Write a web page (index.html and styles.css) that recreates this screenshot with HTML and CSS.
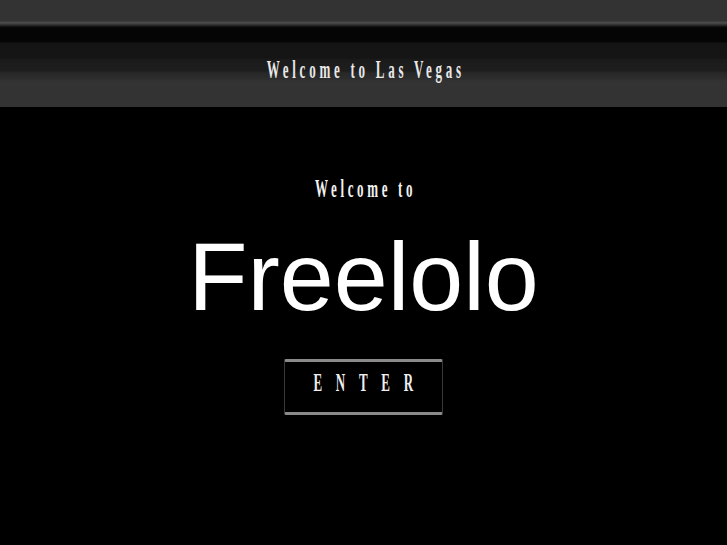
FILE: index.html
```html
<!DOCTYPE html>
<html>
<head>
<meta charset="utf-8">
<link rel="stylesheet" href="styles.css">
</head>
<body>
<header class="topbar">
  <span class="cond head-title">Welcome to Las Vegas</span>
</header>
<main class="intro">
  <div class="cond welcome">Welcome to</div>
  <h1 class="brand">Freelolo</h1>
  <a class="enter" href="#"><span class="cond enter-label">ENTER</span></a>
</main>
</body>
</html>
```
FILE: styles.css
```css
html, body {
  margin: 0;
  padding: 0;
  background: #000;
}
body {
  width: 727px;
  height: 545px;
  overflow: hidden;
  font-family: "Liberation Sans", Arial, sans-serif;
}
.topbar {
  box-sizing: border-box;
  height: 108px;
  padding-top: 55px;
  text-align: center;
  background: linear-gradient(to bottom,
    #333 0, #333 21px, #474747 22px, #4c4c4c 23px, #2c2c2c 25px,
    #0b0b0b 27px, #050505 28px, #050505 42px,
    #141414 43px, #151515 58px, #1b1b1b 60px, #1e1e1e 71px,
    #282828 73px, #2d2d2d 79px, #333 81px, #333 107px, #000 107px);
}
.cond {
  display: inline-block;
  font-family: "Liberation Serif", "Times New Roman", serif;
  font-weight: bold;
  font-size: 26px;
  line-height: 30px;
  transform: scaleX(0.5);
  transform-origin: center;
  white-space: nowrap;
}
.head-title {
  color: #e8e8e8;
  letter-spacing: 7.5px;
  padding-left: 7.5px;
}
.intro {
  display: flex;
  flex-direction: column;
  align-items: center;
}
.welcome {
  margin-top: 66px;
  color: #f2f2f2;
  letter-spacing: 7.3px;
  padding-left: 7.3px;
}
.brand {
  margin: 24px 0 0;
  font-family: "Liberation Sans", Arial, sans-serif;
  font-weight: normal;
  font-size: 97px;
  line-height: 97px;
  color: #fff;
}
.enter {
  box-sizing: border-box;
  display: flex;
  justify-content: center;
  align-items: flex-start;
  margin-top: 34px;
  width: 159px;
  height: 56px;
  padding-top: 6px;
  text-decoration: none;
  border-top: 3px solid #8a8a8a;
  border-bottom: 3px solid #8a8a8a;
  border-left: 1px solid #3a3a3a;
  border-right: 1px solid #3a3a3a;
  border-radius: 2px;
  background: #000;
}
.enter-label {
  flex: none;
  color: #eee;
  letter-spacing: 27.5px;
  padding-left: 27.5px;
}
```
